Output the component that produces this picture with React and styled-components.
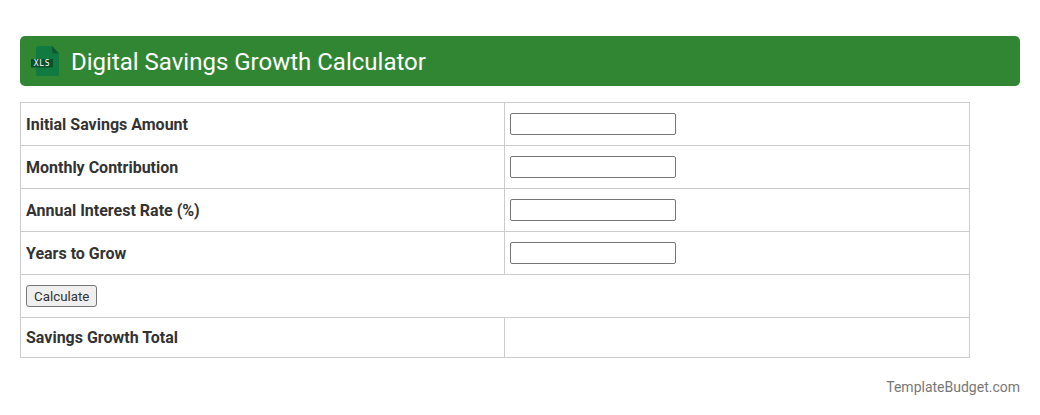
import React from 'react';
import styled, { createGlobalStyle } from 'styled-components';

const GlobalStyle = createGlobalStyle`
  html, body {
    margin: 0;
    padding: 0;
    background: #fff;
    font-family: Roboto, "Liberation Sans", sans-serif;
    color: #333;
  }
`;

const rows = ['Initial Savings Amount', 'Monthly Contribution', 'Annual Interest Rate (%)', 'Years to Grow'];

const XlsIcon = () => (
  <svg width="32" height="32" viewBox="0 0 32 32">
    <path d="M9 1h14l7 7.5V29a2 2 0 0 1-2 2H9a2 2 0 0 1-2-2V3a2 2 0 0 1 2-2z" fill="#107a40" />
    <path d="M23 1l7 7.5h-5a2 2 0 0 1-2-2z" fill="#0b5c30" />
    <rect x="2" y="14" width="22" height="8.5" fill="#0a4f2b" />
    <XlsText x="13" y="21" textAnchor="middle">XLS</XlsText>
  </svg>
);

const App = () => (
  <>
    <GlobalStyle />
    <Page>
      <Header>
        <IconSlot><XlsIcon /></IconSlot>
        <Title>Digital Savings Growth Calculator</Title>
      </Header>
      <Table>
        <tbody>
          {rows.map(label => (
            <Row key={label}>
              <LabelCell $low>{label}</LabelCell>
              <Cell><Field type="text" /></Cell>
            </Row>
          ))}
          <Row>
            <Cell colSpan={2}><CalcButton type="button">Calculate</CalcButton></Cell>
          </Row>
          <TotalRow>
            <LabelCell>Savings Growth Total</LabelCell>
            <Cell />
          </TotalRow>
        </tbody>
      </Table>
      <Footer>TemplateBudget.com</Footer>
    </Page>
  </>
);

export default App;

const Page = styled.div`
  width: 1000px;
  padding: 36px 20px 0;
`;

const Header = styled.div`
  display: flex;
  align-items: center;
  height: 50px;
  background: #318633;
  border-radius: 5px;
`;

const IconSlot = styled.div`
  display: flex;
  width: 32px;
  height: 32px;
  margin: 0 10px 0 9px;
`;

const XlsText = styled.text`
  font-family: "DejaVu Sans Mono", monospace;
  font-size: 8px;
  letter-spacing: 0.7px;
  fill: #fff;
`;

const Title = styled.h1`
  margin: 0;
  padding-top: 2px;
  font-size: 24px;
  font-weight: 400;
  color: #fff;
`;

const Table = styled.table`
  width: 950px;
  margin-top: 16px;
  border-collapse: collapse;
  table-layout: fixed;
  font-size: 16px;
`;

const Row = styled.tr`
  height: 43px;
`;

const TotalRow = styled.tr`
  height: 40px;
`;

const Cell = styled.td`
  padding: 5px;
  border: 1px solid #ccc;
  line-height: 20px;
`;

const LabelCell = styled(Cell)`
  width: 473px;
  padding-top: ${({ $low }) => ($low ? '7px' : '5px')};
  font-weight: 700;
`;

const Field = styled.input`
  display: block;
  box-sizing: border-box;
  width: 166px;
  height: 22px;
  padding: 1px 2px;
  border: 1px solid #767676;
  border-radius: 2px;
`;

const CalcButton = styled.button`
  display: block;
  box-sizing: border-box;
  height: 22px;
  padding: 1px 7px;
  border: 1px solid #767676;
  border-radius: 3px;
  background: #efefef;
  color: #333;
  font-family: Roboto, "Liberation Sans", sans-serif;
  font-size: 13.33px;
`;

const Footer = styled.div`
  margin-top: 20px;
  text-align: right;
  font-size: 14px;
  line-height: 18px;
  color: #777;
`;
